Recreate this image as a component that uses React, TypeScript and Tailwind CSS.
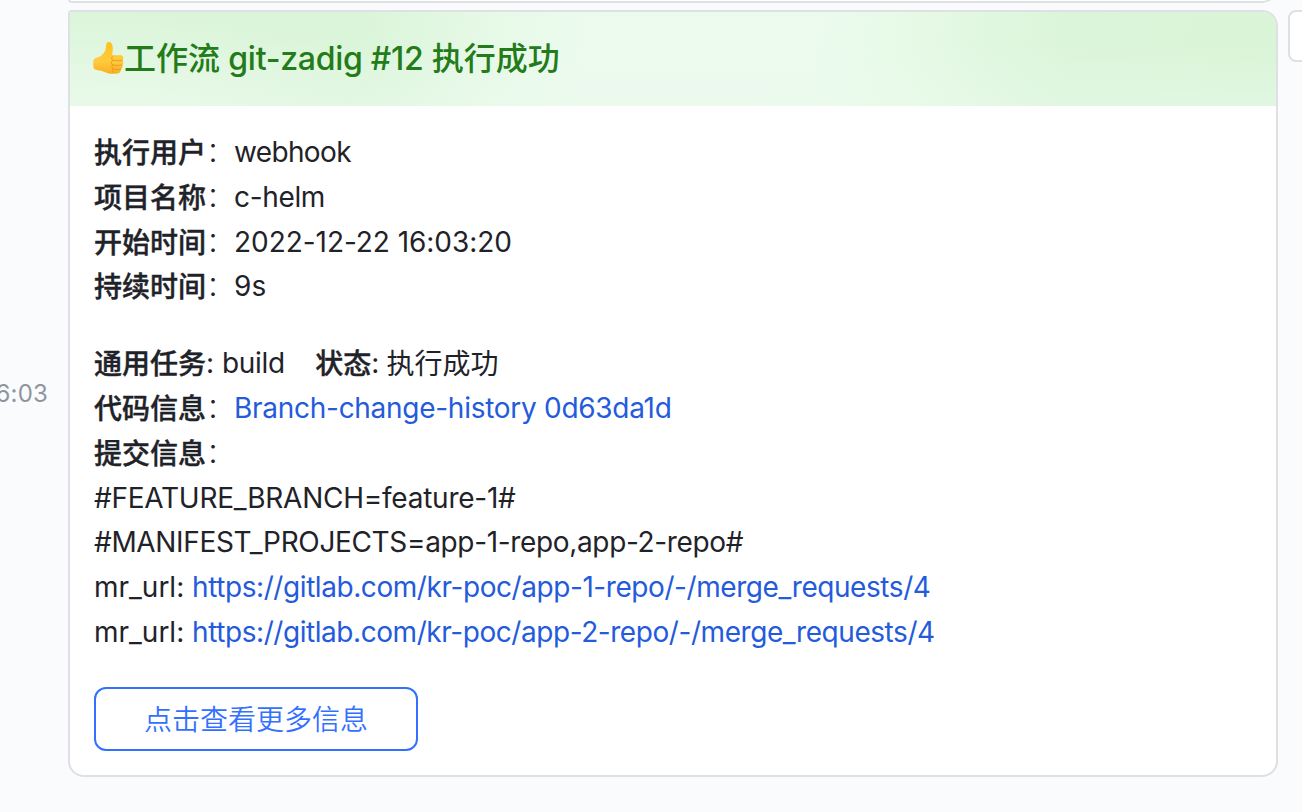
import type { ReactNode } from "react";

function Label({ children }: { children: ReactNode }) {
  return <span className="align-[-1px] font-medium leading-none [-webkit-text-stroke:0.4px_#1f2329]">{children}</span>;
}

function Row({ children }: { children: ReactNode }) {
  return <div className="h-[44.8px] whitespace-pre leading-[44.8px]">{children}</div>;
}

function Link({ children, className = "" }: { children: ReactNode; className?: string }) {
  return <a className={"text-[#245bdb] " + className}>{children}</a>;
}

function Colon() {
  return <span className="font-light">：</span>;
}

function ThumbsUp() {
  return (
    <svg viewBox="0 0 32 34" className="mb-0.5 h-[34px] w-8 shrink-0">
      <defs>
        <linearGradient id="hand" x1="0" y1="0" x2="0" y2="1">
          <stop offset="0" stopColor="#ffc21c" />
          <stop offset="0.6" stopColor="#ffcb3e" />
          <stop offset="1" stopColor="#f7b022" />
        </linearGradient>
      </defs>
      <path
        d="M1.500 19.500C2 16.800 6 16.600 9 14.700C12 12.700 13.800 9.500 14 5.400C14 2.400 15.200 0.800 17 1C20 1.400 21 4.700 20.800 8.200C20.700 10.500 20.200 12.700 20.200 14.300L28.500 14.300C30.700 14.300 31.600 16 31.300 17.600C31.200 18.500 30.700 19 30.300 19.300C31.700 20.200 31.800 23.100 30.200 24C30.900 25.400 30.500 27.700 28.800 28.300C29 30.800 27.700 32.200 25.400 32.500C20.800 33 16 32.700 12.500 30.900C9.300 29.500 5.300 29.700 2.600 28.300C1.200 27.500 0.900 23 1.500 19.500Z"
        fill="url(#hand)"
      />
      <path
        d="M30.300 19.300C27 20 23.200 19.800 20.800 19.400M30.200 24C26.500 24.700 23.100 24.500 20.700 23.900M28.800 28.300C25.700 28.800 23.200 28.600 21.200 28M21 14.900C19.100 16.200 19.300 18.600 20.800 19.400C19 20.500 19.100 23 20.700 23.900C19.400 25 19.700 27.400 21.200 28C20.400 29 20.500 30.600 21.300 31.600"
        fill="none"
        stroke="#ee9a17"
        strokeWidth="1"
        strokeLinecap="round"
      />
    </svg>
  );
}

export default function App() {
  return (
    <div className="flex h-[812px] w-[1302px] overflow-hidden bg-[#fafbfd] font-['Inter','Noto_Sans_CJK_SC',sans-serif] text-[28px] text-[#1f2329]">
      <aside className="flex w-[68px] shrink-0 justify-end pr-[20px] pt-[380px]">
        <time className="whitespace-nowrap text-[24px] leading-7 tracking-[0.2px] text-[#8f959e]">6:03</time>
      </aside>

      <main className="flex w-[1210px] shrink-0 flex-col gap-[7px]">
        <div className="-mt-[29px] h-8 shrink-0 rounded-b-2xl rounded-bl border-2 border-[#dee0e3] bg-white" />
        <article className="flex h-[767px] shrink-0 flex-col overflow-hidden rounded-2xl rounded-tl border-2 border-[#dee0e3] bg-white">
          <header className="flex h-[94px] shrink-0 items-center bg-[radial-gradient(ellipse_360px_110px_at_0%_110%,rgba(236,250,236,0.8),transparent),linear-gradient(to_bottom,transparent_30%,rgba(236,250,239,0.4)_100%),linear-gradient(98deg,#daf5d9_0%,#daf5d9_24%,#e7f9e7_35%,#ecfbee_43%,#ecfbee_61%,#e5f9e4_71%,#daf5d9_82%,#d9f4d7_100%)] pl-[22px] text-[32px] font-medium text-[#237b19]">
            <ThumbsUp />
            <h1 className="whitespace-pre">工作流<span className="tracking-[-0.27px]"> git-zadig #12 </span>执行成功</h1>
          </header>

          <section className="flex flex-col pl-6 pt-6">
            <Row><Label>执行用户</Label><Colon /><span className="tracking-[-0.65px]">webhook</span></Row>
            <Row><Label>项目名称</Label><Colon /><span className="tracking-[-0.35px]">c-helm</span></Row>
            <Row><Label>开始时间</Label><Colon /><span className="tracking-[-0.05px]">2022-12-22 16:03:20</span></Row>
            <Row><Label>持续时间</Label><Colon /><span>9s</span></Row>

            <div className="mt-8">
              <Row><Label>通用任务</Label>: <span className="tracking-[-0.3px]">build{"    "}</span><Label>状态</Label><span className="tracking-[-0.3px]">: </span><span className="align-[-1px] leading-none">执行成功</span></Row>
              <Row><Label>代码信息</Label><Colon /><Link className="tracking-[-0.28px]">Branch-change-history 0d63da1d</Link></Row>
              <Row><Label>提交信息</Label><Colon /></Row>
              <Row><span className="tracking-[-0.25px]">#FEATURE_BRANCH=feature-1#</span></Row>
              <Row><span className="tracking-[-0.34px]">#MANIFEST_PROJECTS=app-1-repo,app-2-repo#</span></Row>
              <Row><span>mr_url: </span><Link className="tracking-[-0.43px]">https://gitlab.com/kr-poc/app-1-repo/-/merge_requests/4</Link></Row>
              <Row><span>mr_url: </span><Link className="tracking-[-0.44px]">https://gitlab.com/kr-poc/app-2-repo/-/merge_requests/4</Link></Row>
            </div>

            <button className="mt-8 flex h-16 w-[324px] items-center justify-center rounded-xl border-2 border-[#3370ff] pt-0.5 text-[28px] font-[350] text-[#3370ff]">
              点击查看更多信息
            </button>
          </section>
        </article>
      </main>

      <div className="ml-[10px] mt-[10px] h-[52px] w-8 shrink-0 rounded-lg border-2 border-[#dee0e3] bg-white" />
    </div>
  );
}
